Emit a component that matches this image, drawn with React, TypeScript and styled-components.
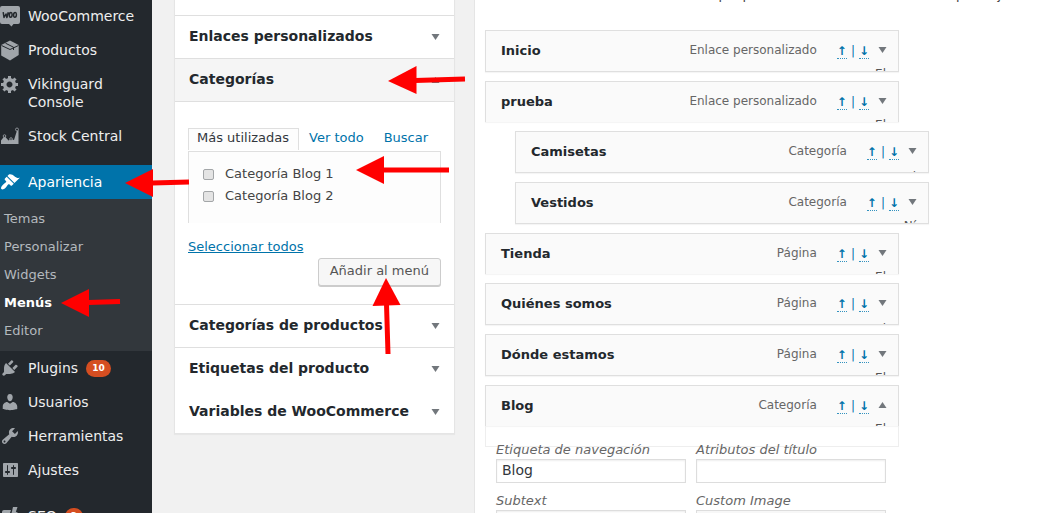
import React from "react";
import styled, { createGlobalStyle } from "styled-components";

const GlobalStyle = createGlobalStyle`
  *, *::before, *::after { box-sizing: border-box; }
  body {
    margin: 0;
    background: #f1f1f1;
    color: #444;
    font-family: "DejaVu Sans", sans-serif;
    font-size: 13px;
    line-height: 18px;
    overflow: hidden;
  }
  input, button, select { font: inherit; }
`;

const Page = styled.div`
  position: relative;
  display: flex;
  height: 100vh;
  overflow: hidden;
`;

/* ---------- admin menu ---------- */

const Sidebar = styled.nav`
  flex: 0 0 152px;
  background: #23282d;
  overflow: hidden;
`;

const MenuList = styled.ul`
  list-style: none;
  margin: -1px 0 0;
  padding: 0;
`;

const MenuEntry = styled.li<{ $gap?: boolean }>`
  margin-top: ${(p) => (p.$gap ? 12 : 0)}px;
`;

const MenuLink = styled.a<{ $current?: boolean }>`
  display: flex;
  align-items: flex-start;
  gap: 8px;
  padding: 8px 8px 8px 0;
  font-size: 14px;
  color: ${(p) => (p.$current ? "#fff" : "#eee")};
  background: ${(p) => (p.$current ? "#0073aa" : "transparent")};
  text-decoration: none;
`;

const MenuIcon = styled.svg<{ $current?: boolean }>`
  flex: none;
  width: 20px;
  height: 20px;
  margin: -1px 0;
  fill: ${(p) => (p.$current ? "#fff" : "#a0a5aa")};
`;

const Badge = styled.span`
  display: inline-block;
  margin: 1px 0 0 8px;
  padding: 0 6px;
  border-radius: 10px;
  background: #d54e21;
  color: #fff;
  font-size: 9px;
  font-weight: 700;
  line-height: 17px;
  vertical-align: top;
`;

const SubMenu = styled.ul`
  list-style: none;
  margin: 0;
  padding: 6px 0;
  background: #32373c;
`;

const SubLink = styled.a<{ $current?: boolean }>`
  display: block;
  padding: 5px 4px;
  color: ${(p) => (p.$current ? "#fff" : "#b4b9be")};
  font-weight: ${(p) => (p.$current ? 700 : 400)};
  text-decoration: none;
`;

/* ---------- accordion ---------- */

const Main = styled.main`
  display: flex;
  flex: 1;
  align-items: flex-start;
  gap: 19px;
  min-width: 0;
  height: 100%;
  padding-left: 22px;
`;

const Accordion = styled.div`
  flex: 0 0 281px;
  margin-top: -28px;
  background: #fff;
  border: 1px solid #e5e5e5;
  box-shadow: 0 1px 1px rgba(0, 0, 0, 0.04);
`;

const SectionTitle = styled.button<{ $open?: boolean; $plain?: boolean }>`
  display: flex;
  align-items: center;
  justify-content: space-between;
  width: 100%;
  height: 43px;
  padding: 0 14px 2px;
  border: 0;
  border-bottom: 1px solid ${(p) => (p.$plain ? "transparent" : "#dfdfdf")};
  background: ${(p) => (p.$open ? "#f5f5f5" : "#fff")};
  color: #23282d;
  font-size: 14px;
  font-weight: 700;
  text-align: left;

  &:last-child {
    height: 42px;
    border-bottom: 0;
  }

  svg { margin-top: 2px; }
`;

const SectionBody = styled.div`
  padding: 26px 13px 18px;
  border-bottom: 1px solid #dfdfdf;
`;

const Tabs = styled.div`
  display: flex;
`;

const Tab = styled.a<{ $active?: boolean }>`
  height: 22px;
  padding: 0 9px;
  border: 1px solid ${(p) => (p.$active ? "#dfdfdf" : "transparent")};
  border-bottom: 0;
  background: ${(p) => (p.$active ? "#fdfdfd" : "transparent")};
  color: ${(p) => (p.$active ? "#32373c" : "#0073aa")};
  text-decoration: none;
  white-space: nowrap;

  &:first-child { padding: 0 9px 0 8px; }
`;

const TabPanel = styled.div`
  margin-top: 1px;
  padding: 11px 14px 16px;
  border: 1px solid #dfdfdf;
  border-bottom: 0;
  background: #fdfdfd;
`;

const CheckLabel = styled.label`
  display: flex;
  align-items: center;
  gap: 11px;
  height: 22px;
`;

const Check = styled.input`
  appearance: none;
  width: 11px;
  height: 11px;
  margin: 0;
  border: 1px solid #a3a6a8;
  border-radius: 2px;
  background: #e4e4e4;
`;

const SelectAll = styled.a`
  display: block;
  margin-top: 15px;
  color: #0073aa;
`;

const ButtonRow = styled.div`
  display: flex;
  justify-content: flex-end;
  margin-top: 2px;
`;

const AddButton = styled.button`
  height: 28px;
  padding: 0 11px 2px;
  border: 1px solid #ccc;
  border-radius: 3px;
  background: #f7f7f7;
  box-shadow: 0 1px 0 #ccc;
  color: #555;
`;

/* ---------- menu structure ---------- */

const Panel = styled.section`
  flex: 1;
  min-width: 0;
  height: 100%;
  padding: 0 10px;
  overflow: hidden;
  border-left: 1px solid #e5e5e5;
  background: #fff;
`;

const Intro = styled.p`
  margin: -14px 0 26px;
  padding-left: 2px;
  white-space: nowrap;
`;

const ItemList = styled.ul`
  list-style: none;
  display: flex;
  flex-direction: column;
  gap: 9px;
  margin: 0;
  padding: 0;
`;

const Item = styled.li<{ $depth?: number }>`
  max-width: 414px;
  margin-left: ${(p) => (p.$depth || 0) * 30}px;
`;

const ItemBar = styled.div<{ $cut?: boolean }>`
  height: ${(p) => (p.$cut ? 41 : 42)}px;
  padding: 0 11px 0 15px;
  overflow: hidden;
  border: 1px solid #dfdfdf;
  border-bottom-width: ${(p) => (p.$cut ? 0 : 1)}px;
  background: #fafafa;
  box-shadow: 0 1px 1px rgba(0, 0, 0, 0.04);
`;

const ItemHead = styled.div`
  display: flex;
  align-items: center;
  height: 38px;
`;

const ItemTitle = styled.strong`
  flex: 1;
  padding-top: 2px;
  color: #23282d;
`;

const ItemType = styled.span`
  margin-right: 20px;
  color: #666;
  font-size: 12px;
`;

const Order = styled.span`
  display: flex;
  gap: 4px;
  margin-right: 9px;
  padding-top: 2px;
  color: #0073aa;
  font-size: 12px;
  line-height: 14px;
`;

const OrderLink = styled.a`
  border-bottom: 1px dotted #3392bf;
  color: #0073aa;
  font-weight: 700;
  text-decoration: none;
`;

const ItemHint = styled.div<{ $low?: boolean }>`
  margin-top: ${(p) => (p.$low ? -2 : -4)}px;
  padding-right: 1px;
  color: #555;
  font-size: 12px;
  text-align: right;
`;

const Settings = styled.div`
  display: grid;
  grid-template-columns: 190px 190px;
  column-gap: 10px;
  height: 21px;
  padding: 15px 10px 0;
  border: 1px solid #eee;
  border-top: 0;
`;

const Field = styled.label`
  display: block;
  height: 51px;
  color: #666;
  font-style: italic;
`;

const TextBox = styled.input`
  display: block;
  width: 100%;
  height: 24px;
  padding: 0 5px 2px;
  border: 1px solid #ddd;
  background: #fff;
  box-shadow: inset 0 1px 2px rgba(0, 0, 0, 0.07);
  color: #32373c;
  font-size: 14px;
  font-style: normal;
`;

const ImageBox = styled.textarea`
  display: block;
  width: 100%;
  height: 40px;
  border: 1px solid #ddd;
  background: #f7f7f7;
  overflow-y: scroll;
  resize: none;
`;

const Caret = styled.svg`
  flex: none;
  width: 9px;
  height: 6px;
  fill: #72777c;
`;

/* ---------- red callout arrows, drawn over the page ---------- */

const Callouts = styled.svg`
  position: absolute;
  top: 0;
  left: 0;
  width: 1060px;
  height: 513px;
  pointer-events: none;
  fill: #f00;
  stroke: #f00;
`;

const icons: Record<string, React.ReactNode> = {
  woo: (
    <>
      <path d="M2 0h16a2 2 0 0 1 2 2v14a2 2 0 0 1-2 2h-4.500l-2 2.500-2.500-2.500H2a2 2 0 0 1-2-2V2a2 2 0 0 1 2-2z" />
      <path
        d="M3.200 6.200l.800 5.300L6 8l.900 3.500L8.300 6.200M11 6.500c-1.300 0-1.700 1.300-1.700 2.500s.400 2.300 1.200 2.300 1.600-1.300 1.600-2.800c0-1-.400-2-1.100-2zM15.300 6.500c-1.300 0-1.700 1.300-1.700 2.500s.400 2.300 1.200 2.300 1.600-1.300 1.600-2.800c0-1-.400-2-1.100-2z"
        fill="none"
        stroke="#23282d"
        strokeWidth="1.500"
        strokeLinejoin="round"
      />
    </>
  ),
  box: (
    <>
      <path d="M10 .5l8.700 4.500v10L10 20.500 1.200 15.500V5z" />
      <path d="M1.500 5.500L10 9.500l8.500-4M5.500 3.200l8 4v2.800" fill="none" stroke="#23282d" strokeWidth="1" />
    </>
  ),
  gear: (
    <path d="M18 12h-2.180c-.17.7-.44 1.350-.81 1.930l1.540 1.540-2.100 2.100-1.540-1.540c-.58.36-1.230.63-1.910.79V19H8v-2.180c-.68-.16-1.330-.43-1.910-.79l-1.540 1.540-2.120-2.120 1.540-1.540c-.36-.58-.63-1.230-.79-1.910H1V9.030h2.170c.16-.7.44-1.350.8-1.940L2.430 5.550l2.100-2.100 1.540 1.540c.58-.37 1.240-.64 1.930-.81V2h3v2.180c.68.16 1.330.43 1.910.79l1.540-1.540 2.120 2.120-1.540 1.540c.36.59.64 1.240.8 1.940H18V12zm-8.500 1.500c1.660 0 3-1.340 3-3s-1.340-3-3-3-3 1.340-3 3 1.340 3 3 3z" />
  ),
  stock: (
    <>
      <path d="M1 18V14.500L4.500 10l4 4.500 2.500-1.500 3 1 3-9.500h1.500V18z" />
      <g fill="#23282d" stroke="#a0a5aa" strokeWidth=".8">
        <circle cx="4.500" cy="10" r="1.300" />
        <circle cx="11" cy="13" r="1.300" />
        <circle cx="17" cy="3.500" r="1.500" />
      </g>
    </>
  ),
  brush: (
    <path d="M14.480 11.060L7.410 3.990l1.500-1.500c.5-.56 2.300-.47 3.510.32 1.210.8 1.430 1.280 2.910 2.100 1.180.64 2.450 1.260 4.450.85zm-.71.71L6.700 4.700 4.930 6.470c-.39.39-.39 1.020 0 1.410l1.060 1.060c.39.39.39 1.030 0 1.420-.6.6-1.430 1.110-2.210 1.690-.35.26-.7.53-1.010.84C1.430 14.230.4 16.080 1.400 17.070c.99 1 2.840-.03 4.180-1.360.31-.31.58-.66.85-1.020.57-.78 1.080-1.610 1.690-2.210.39-.39 1.020-.39 1.410 0l1.060 1.060c.39.39 1.020.39 1.410 0z" />
  ),
  plug: (
    <path d="M13.110 4.360L9.870 7.600 8 5.730l3.240-3.240c.35-.34 1.050-.2 1.560.32.52.51.66 1.210.31 1.550zm-8 1.770l.91-1.120 9.010 9.010-1.190.84c-.71.71-2.630 1.160-3.820 1.160H6.140L4.900 17.260c-.59.59-1.540.59-2.120 0-.59-.58-.59-1.530 0-2.120l1.240-1.240v-3.880c0-1.130.4-3.190 1.090-3.890zm7.260 3.970l3.240-3.240c.34-.35 1.040-.21 1.550.31.52.51.66 1.210.31 1.550l-3.240 3.250z" />
  ),
  user: (
    <path d="M10 9.250c-2.270 0-2.730-3.440-2.730-3.440C7 4.020 7.820 2 9.970 2c2.160 0 2.980 2.020 2.710 3.810 0 0-.41 3.440-2.680 3.440zm0 2.570L12.720 10c2.390 0 4.520 2.330 4.520 4.530v2.490s-3.650 1.130-7.240 1.130c-3.650 0-7.240-1.130-7.240-1.130v-2.490c0-2.250 1.940-4.480 4.470-4.480z" />
  ),
  wrench: (
    <path d="M16.680 9.770c-1.340 1.340-3.300 1.670-4.950.99l-5.410 6.520c-.99.99-2.590.99-3.580 0s-.99-2.590 0-3.570l6.520-5.420c-.68-1.650-.35-3.610.99-4.950 1.280-1.280 3.120-1.620 4.720-1.060l-2.890 2.890 2.820 2.820 2.860-2.870c.53 1.580.18 3.390-1.080 4.650zM3.810 16.210c.4.39 1.040.39 1.430 0 .4-.4.4-1.040 0-1.430-.39-.4-1.030-.4-1.430 0-.39.39-.39 1.030 0 1.430z" />
  ),
  sliders: (
    <path
      fillRule="evenodd"
      d="M18 16V4c0-.55-.45-1-1-1H4c-.55 0-1 .45-1 1v12c0 .55.45 1 1 1h13c.55 0 1-.45 1-1zM8 11h1c.55 0 1 .45 1 1s-.45 1-1 1H8v1.500c0 .28-.22.5-.5.5s-.5-.22-.5-.5V13H6c-.55 0-1-.45-1-1s.45-1 1-1h1V5.500c0-.28.22-.5.5-.5s.5.22.5.5V11zm5-2h-1c-.55 0-1-.45-1-1s.45-1 1-1h1V5.500c0-.28.22-.5.5-.5s.5.22.5.5V7h1c.55 0 1 .45 1 1s-.45 1-1 1h-1v5.500c0 .28-.22.5-.5.5s-.5-.22-.5-.5V9z"
    />
  ),
  seo: (
    <>
      <path d="M2 6a2 2 0 0 1 2-2h7l-3 9-2-5H4l4 10H2z" />
      <path d="M13 1h4.500L12 18H9z" />
      <path d="M14 6h2a2 2 0 0 1 2 2v10h-7z" />
    </>
  ),
};

type MenuData = { label: string; icon: string; badge?: string; gap?: boolean; sub?: string[] };

const menu: MenuData[] = [
  { label: "WooCommerce", icon: "woo" },
  { label: "Productos", icon: "box" },
  { label: "Vikinguard Console", icon: "gear" },
  { label: "Stock Central", icon: "stock" },
  {
    label: "Apariencia",
    icon: "brush",
    gap: true,
    sub: ["Temas", "Personalizar", "Widgets", "Menús", "Editor"],
  },
  { label: "Plugins", icon: "plug", badge: "10" },
  { label: "Usuarios", icon: "user" },
  { label: "Herramientas", icon: "wrench" },
  { label: "Ajustes", icon: "sliders" },
  { label: "SEO", icon: "seo", badge: "2", gap: true },
];

type ItemData = {
  title: string;
  type: string;
  depth?: number;
  cut?: boolean;
  hint?: string;
  low?: boolean;
  open?: boolean;
};

const items: ItemData[] = [
  { title: "Inicio", type: "Enlace personalizado" },
  { title: "prueba", type: "Enlace personalizado", cut: true },
  { title: "Camisetas", type: "Categoría", depth: 1, low: true },
  { title: "Vestidos", type: "Categoría", depth: 1, hint: "Ní" },
  { title: "Tienda", type: "Página", cut: true },
  { title: "Quiénes somos", type: "Página", low: true },
  { title: "Dónde estamos", type: "Página" },
  { title: "Blog", type: "Categoría", cut: true, open: true },
];

const Toggle = ({ up }: { up?: boolean }) => (
  <Caret viewBox="0 0 9 6" aria-hidden="true">
    <path d={up ? "M.5 6L4.500 0l4 6z" : "M.5 0h8l-4 6z"} />
  </Caret>
);

export default function App() {
  return (
    <Page>
      <GlobalStyle />
      <Sidebar>
        <MenuList>
          {menu.map((m) => (
            <MenuEntry key={m.label} $gap={m.gap}>
              <MenuLink href="#" $current={!!m.sub}>
                <MenuIcon viewBox="0 0 20 20" $current={!!m.sub} overflow="visible" aria-hidden="true">
                  {icons[m.icon]}
                </MenuIcon>
                <span>
                  {m.label}
                  {m.badge && <Badge>{m.badge}</Badge>}
                </span>
              </MenuLink>
              {m.sub && (
                <SubMenu>
                  {m.sub.map((s) => (
                    <li key={s}>
                      <SubLink href="#" $current={s === "Menús"}>{s}</SubLink>
                    </li>
                  ))}
                </SubMenu>
              )}
            </MenuEntry>
          ))}
        </MenuList>
      </Sidebar>

      <Main>
        <Accordion>
          <SectionTitle aria-label="Páginas" />
          <SectionTitle>Enlaces personalizados<Toggle /></SectionTitle>
          <SectionTitle $open>Categorías<Toggle up /></SectionTitle>
          <SectionBody>
            <Tabs>
              <Tab href="#" $active>Más utilizadas</Tab>
              <Tab href="#">Ver todo</Tab>
              <Tab href="#">Buscar</Tab>
            </Tabs>
            <TabPanel>
              <CheckLabel><Check type="checkbox" />Categoría Blog 1</CheckLabel>
              <CheckLabel><Check type="checkbox" />Categoría Blog 2</CheckLabel>
            </TabPanel>
            <SelectAll href="#">Seleccionar todos</SelectAll>
            <ButtonRow><AddButton>Añadir al menú</AddButton></ButtonRow>
          </SectionBody>
          <SectionTitle>Categorías de productos<Toggle /></SectionTitle>
          <SectionTitle $plain>Etiquetas del producto<Toggle /></SectionTitle>
          <SectionTitle $plain>Variables de WooCommerce<Toggle /></SectionTitle>
        </Accordion>

        <Panel>
          <Intro>
            Coloca cada elemento en el orden que prefieras. Haz clic en las flechas para ajustar
          </Intro>
          <ItemList>
            {items.map((it) => (
              <Item key={it.title} $depth={it.depth}>
                <ItemBar $cut={it.cut}>
                  <ItemHead>
                    <ItemTitle>{it.title}</ItemTitle>
                    <ItemType>{it.type}</ItemType>
                    <Order>
                      <OrderLink href="#">↑</OrderLink>|<OrderLink href="#">↓</OrderLink>
                    </Order>
                    <Toggle up={it.open} />
                  </ItemHead>
                  <ItemHint $low={it.low}>{it.hint || "El"}</ItemHint>
                </ItemBar>
                {it.open && (
                  <Settings>
                    <Field>Etiqueta de navegación<TextBox defaultValue="Blog" /></Field>
                    <Field>Atributos del título<TextBox /></Field>
                    <Field>Subtext<TextBox /></Field>
                    <Field>Custom Image<ImageBox /></Field>
                  </Settings>
                )}
              </Item>
            ))}
          </ItemList>
        </Panel>
      </Main>

      <Callouts viewBox="0 0 1060 513" aria-hidden="true">
        <g stroke="none">
          <path d="M388 81l28.500-15v28z" />
          <path d="M125 183l28-14v28z" />
          <path d="M356 170l28-14v28z" />
          <path d="M61 303l28-14v28z" />
          <path d="M386 278l14.500 27-28 1z" />
        </g>
        <path strokeWidth="5" d="M415 80.500L465 79M152 183l37-1M383 170h66M88 302.500l32-1M386.500 304l1.500 50" />
      </Callouts>
    </Page>
  );
}
